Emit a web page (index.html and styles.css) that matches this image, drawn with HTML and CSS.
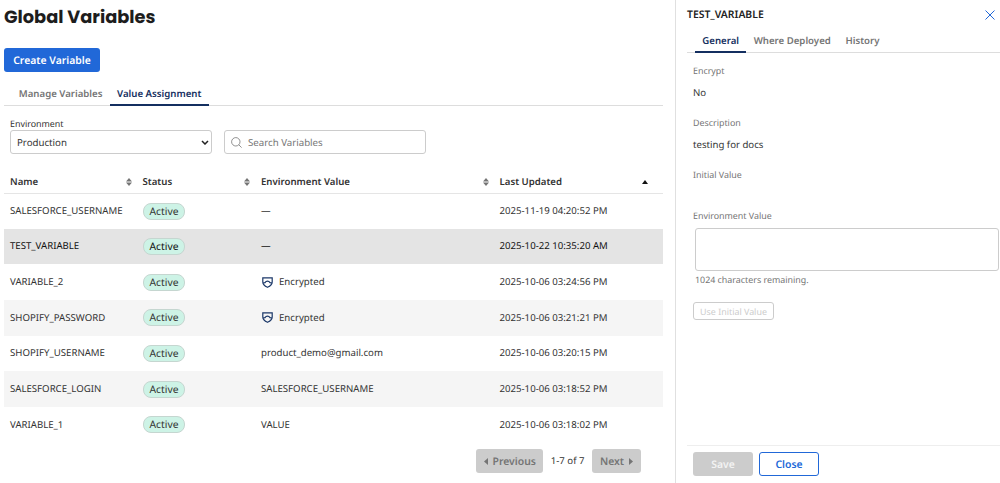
FILE: index.html
```html
<!DOCTYPE html>
<html lang="en">
<head>
  <meta charset="UTF-8" />
  <meta name="viewport" content="width=device-width, initial-scale=1.0" />
  <title>Global Variables</title>
  <link rel="stylesheet" href="styles.css">
</head>
<body>
  <svg class="defs" aria-hidden="true">
    <symbol id="sort" viewBox="0 0 6 8"><path d="M3 0L6 3.5H0zM3 8L0 4.5H6z" /></symbol>
    <symbol id="shield" viewBox="0 0 11 11">
      <path d="M.8.9H10.2V5C10.2 7.4 8 9.2 5.5 10.3C3 9.2 .8 7.4.8 5z" />
      <path d="M1.2 5.8L3 5.6C4.2 3.7 6.8 3.7 8 5.6L9.8 5.8" />
    </symbol>
  </svg>

  <main class="main">
    <h1>Global Variables</h1>
    <button class="btn btn-create">Create Variable</button>

    <nav class="tabs">
      <a class="tab">Manage Variables</a>
      <a class="tab active">Value Assignment</a>
    </nav>

    <div class="filters">
      <div class="filter">
        <label for="environment">Environment</label>
        <div class="field select-field">
          <select id="environment">
            <option>Production</option>
          </select>
          <svg class="chevron" viewBox="0 0 8 5"><path d="M1 1L4 4L7 1" /></svg>
        </div>
      </div>
      <div class="field search-field">
        <svg class="search-icon" viewBox="0 0 11 11"><circle cx="4.8" cy="4.8" r="4.2" /><path d="M7.8 7.8L10.6 10.6" /></svg>
        <input type="text" placeholder="Search Variables">
      </div>
    </div>

    <table class="variables">
      <colgroup>
        <col class="col-name"><col class="col-status"><col class="col-value"><col class="col-updated">
      </colgroup>
      <thead>
        <tr>
          <th><div class="head">Name <svg class="sort"><use href="#sort" /></svg></div></th>
          <th><div class="head">Status <svg class="sort"><use href="#sort" /></svg></div></th>
          <th><div class="head">Environment Value <svg class="sort"><use href="#sort" /></svg></div></th>
          <th><div class="head head-last">Last Updated <svg class="sort-up" viewBox="0 0 6 4"><path d="M3 0L6 4H0z" /></svg></div></th>
        </tr>
      </thead>
      <tbody>
        <tr>
          <td>SALESFORCE_USERNAME</td>
          <td><span class="badge">Active</span></td>
          <td>—</td>
          <td>2025-11-19 04:20:52 PM</td>
        </tr>
        <tr class="selected">
          <td>TEST_VARIABLE</td>
          <td><span class="badge">Active</span></td>
          <td>—</td>
          <td>2025-10-22 10:35:20 AM</td>
        </tr>
        <tr>
          <td>VARIABLE_2</td>
          <td><span class="badge">Active</span></td>
          <td><div class="encrypted"><svg class="shield"><use href="#shield" /></svg>Encrypted</div></td>
          <td>2025-10-06 03:24:56 PM</td>
        </tr>
        <tr class="striped">
          <td>SHOPIFY_PASSWORD</td>
          <td><span class="badge">Active</span></td>
          <td><div class="encrypted"><svg class="shield"><use href="#shield" /></svg>Encrypted</div></td>
          <td>2025-10-06 03:21:21 PM</td>
        </tr>
        <tr>
          <td>SHOPIFY_USERNAME</td>
          <td><span class="badge">Active</span></td>
          <td>product_demo@gmail.com</td>
          <td>2025-10-06 03:20:15 PM</td>
        </tr>
        <tr class="striped">
          <td>SALESFORCE_LOGIN</td>
          <td><span class="badge">Active</span></td>
          <td>SALESFORCE_USERNAME</td>
          <td>2025-10-06 03:18:52 PM</td>
        </tr>
        <tr>
          <td>VARIABLE_1</td>
          <td><span class="badge">Active</span></td>
          <td>VALUE</td>
          <td>2025-10-06 03:18:02 PM</td>
        </tr>
      </tbody>
    </table>

    <div class="pagination">
      <button class="btn btn-page btn-previous" disabled><svg class="arrow" viewBox="0 0 4 7"><path d="M4 0V7L0 3.5z" /></svg>Previous</button>
      <span>1-7 of 7</span>
      <button class="btn btn-page btn-next" disabled>Next<svg class="arrow" viewBox="0 0 4 7"><path d="M0 0V7L4 3.5z" /></svg></button>
    </div>
  </main>

  <aside class="panel">
    <div class="panel-header">
      <h2>TEST_VARIABLE</h2>
      <svg class="close" viewBox="0 0 10 10"><path d="M.5.5L9.5 9.5M9.5.5L.5 9.5" /></svg>
    </div>

    <nav class="tabs panel-tabs">
      <a class="tab active">General</a>
      <a class="tab">Where Deployed</a>
      <a class="tab">History</a>
    </nav>

    <div class="details">
      <div class="detail">
        <div class="detail-label">Encrypt</div>
        <div class="detail-value">No</div>
      </div>
      <div class="detail">
        <div class="detail-label">Description</div>
        <div class="detail-value">testing for docs</div>
      </div>
      <div class="detail detail-empty">
        <div class="detail-label">Initial Value</div>
      </div>
      <label class="detail-label" for="env-value">Environment Value</label>
      <textarea id="env-value"></textarea>
      <div class="remaining">1024 characters remaining.</div>
      <button class="btn-initial" disabled>Use Initial Value</button>
    </div>

    <div class="panel-footer">
      <button class="btn btn-save" disabled>Save</button>
      <button class="btn btn-close">Close</button>
    </div>
  </aside>
</body>
</html>
```
FILE: styles.css
```css
* {
  box-sizing: border-box;
}

body {
  margin: 0;
  display: flex;
  height: 483px;
  overflow: hidden;
  background: #fff;
  color: #333;
  font-family: "Noto Sans", sans-serif;
  font-size: 9.65px;
  line-height: 14px;
  text-rendering: geometricPrecision;
}

button, input, select, textarea {
  font-family: inherit;
  margin: 0;
  text-rendering: inherit;
}

svg {
  display: block;
  flex-shrink: 0;
}

.defs {
  position: absolute;
  width: 0;
  height: 0;
}

.main {
  width: 675px;
  flex-shrink: 0;
  padding: 4px 12px 0 4px;
}

h1 {
  margin: 0;
  color: #1d1d1d;
  font-family: Poppins, Inter, sans-serif;
  font-size: 17.8px;
  font-weight: 700;
  line-height: 28px;
}

.btn {
  height: 24px;
  padding: 1px 0 0;
  border: none;
  border-radius: 3px;
  font-size: 10.4px;
  font-weight: 600;
  line-height: 16px;
}

.btn-create {
  display: block;
  width: 96px;
  margin-top: 16px;
  background: #2168d8;
  color: #fff;
}

.tabs {
  display: flex;
  height: 24px;
  margin-top: 10px;
  border-bottom: 1px solid #ddd;
}

.tab {
  height: 24px;
  padding: 5px 7.3px 0;
  color: #757575;
  font-weight: 600;
}

.main .tab:first-child {
  margin-left: 7.5px;
}

.tab.active {
  border-bottom: 2px solid #142f60;
  color: #142f60;
}

.filters {
  display: flex;
  align-items: flex-end;
  gap: 12px;
  margin: 11px 0 0 6px;
}

.filter label {
  display: block;
  font-size: 8.9px;
  line-height: 13px;
}

.field {
  display: flex;
  align-items: center;
  width: 202px;
  height: 24px;
  border: 1px solid #ccc;
  border-radius: 3px;
  background: #fff;
}

.field select,
.field input {
  flex: 1;
  min-width: 0;
  height: 20px;
  padding: 0;
  border: none;
  outline: none;
  background: none;
  color: #333;
  font-size: 9.7px;
}

.field select {
  appearance: none;
  padding-left: 6px;
}

.field input::placeholder {
  color: #757575;
}

.chevron {
  width: 8px;
  height: 5px;
  margin-right: 2px;
  fill: none;
  stroke: #222;
  stroke-width: 1.5;
}

.search-icon {
  width: 11px;
  height: 11px;
  margin: 0 6px 0 6px;
  fill: none;
  stroke: #757575;
  stroke-width: 0.8;
}

.variables {
  width: 659px;
  margin-top: 17px;
  border-collapse: collapse;
  table-layout: fixed;
}

.col-name { width: 132.5px; }
.col-status { width: 118.5px; }
.col-value { width: 238.5px; }
.col-updated { width: 169.5px; }

.variables th {
  height: 22px;
  padding: 0 5px 0 6px;
  border-bottom: 1px solid #e5e5e5;
  color: #333;
  font-weight: 600;
  text-align: left;
}

.head {
  display: flex;
  align-items: center;
  justify-content: space-between;
}

.head-last {
  padding-right: 10px;
}

.sort {
  width: 6px;
  height: 8px;
  fill: #757575;
}

.sort-up {
  width: 6px;
  height: 4px;
  fill: #111;
}

.variables td {
  height: 35.65px;
  padding: 0 6px;
}

.selected {
  background: #e4e4e4;
  color: #111;
}

.striped {
  background: #f5f5f5;
}

.badge {
  display: inline-block;
  height: 17px;
  padding: 0 6px;
  border: 1px solid #c5d6d0;
  border-radius: 8px;
  background: #cdf3e6;
  font-size: 10.3px;
  line-height: 16px;
  vertical-align: middle;
}

.encrypted {
  display: flex;
  align-items: center;
}

.shield {
  width: 11px;
  height: 11px;
  margin: 0 6px 0 1px;
  fill: none;
  stroke: #1b3768;
  stroke-width: 1.2;
}

.pagination {
  display: flex;
  align-items: center;
  justify-content: flex-end;
  gap: 7.5px;
  margin: 7px 22px 0 0;
}

.btn-page {
  display: flex;
  align-items: center;
  justify-content: center;
  gap: 5px;
  background: #ccc;
  color: #757575;
}

.btn-previous {
  width: 67px;
}

.btn-next {
  width: 49px;
}

.arrow {
  width: 4px;
  height: 7px;
  fill: #757575;
}

.panel {
  flex: 1;
  min-width: 0;
  display: flex;
  flex-direction: column;
  padding-left: 11px;
  border-left: 1px solid #e0e0e0;
}

.panel-header {
  display: flex;
  align-items: center;
  justify-content: space-between;
  height: 29px;
  padding-right: 5px;
}

h2 {
  margin: 0;
  padding-top: 1px;
  color: #222;
  font-size: 10.4px;
  font-weight: 600;
}

.close {
  width: 10px;
  height: 10px;
  fill: none;
  stroke: #2168d8;
  stroke-width: 1;
}

.panel-tabs {
  margin-top: 0;
  padding-left: 8px;
}

.details {
  flex: 1;
  padding: 11px 0 0 6px;
}

.detail {
  height: 52px;
}

.detail-empty {
  height: 41px;
}

.detail-label {
  display: block;
  color: #757575;
  font-size: 8.9px;
}

.detail-value {
  margin-top: 8px;
}

textarea {
  display: block;
  width: 304px;
  height: 43px;
  margin: 5px 0 0 2px;
  border: 1px solid #ccc;
  border-radius: 3px;
  resize: none;
}

.remaining {
  margin: 2px 0 0 2px;
  color: #757575;
  font-size: 8.9px;
}

.btn-initial {
  display: block;
  width: 81px;
  height: 18px;
  margin-top: 15px;
  padding: 0;
  border: 1px solid #ccc;
  border-radius: 3px;
  background: #fff;
  color: #ccc;
  font-size: 8.9px;
}

.panel-footer {
  display: flex;
  gap: 6px;
  height: 38px;
  padding: 6px 0 0 6px;
  border-top: 1px solid #eee;
}

.btn-save {
  width: 60px;
  background: #ccc;
  color: #f3f3f3;
}

.btn-close {
  width: 60px;
  border: 1px solid #2168d8;
  background: #fff;
  color: #2168d8;
}
```
